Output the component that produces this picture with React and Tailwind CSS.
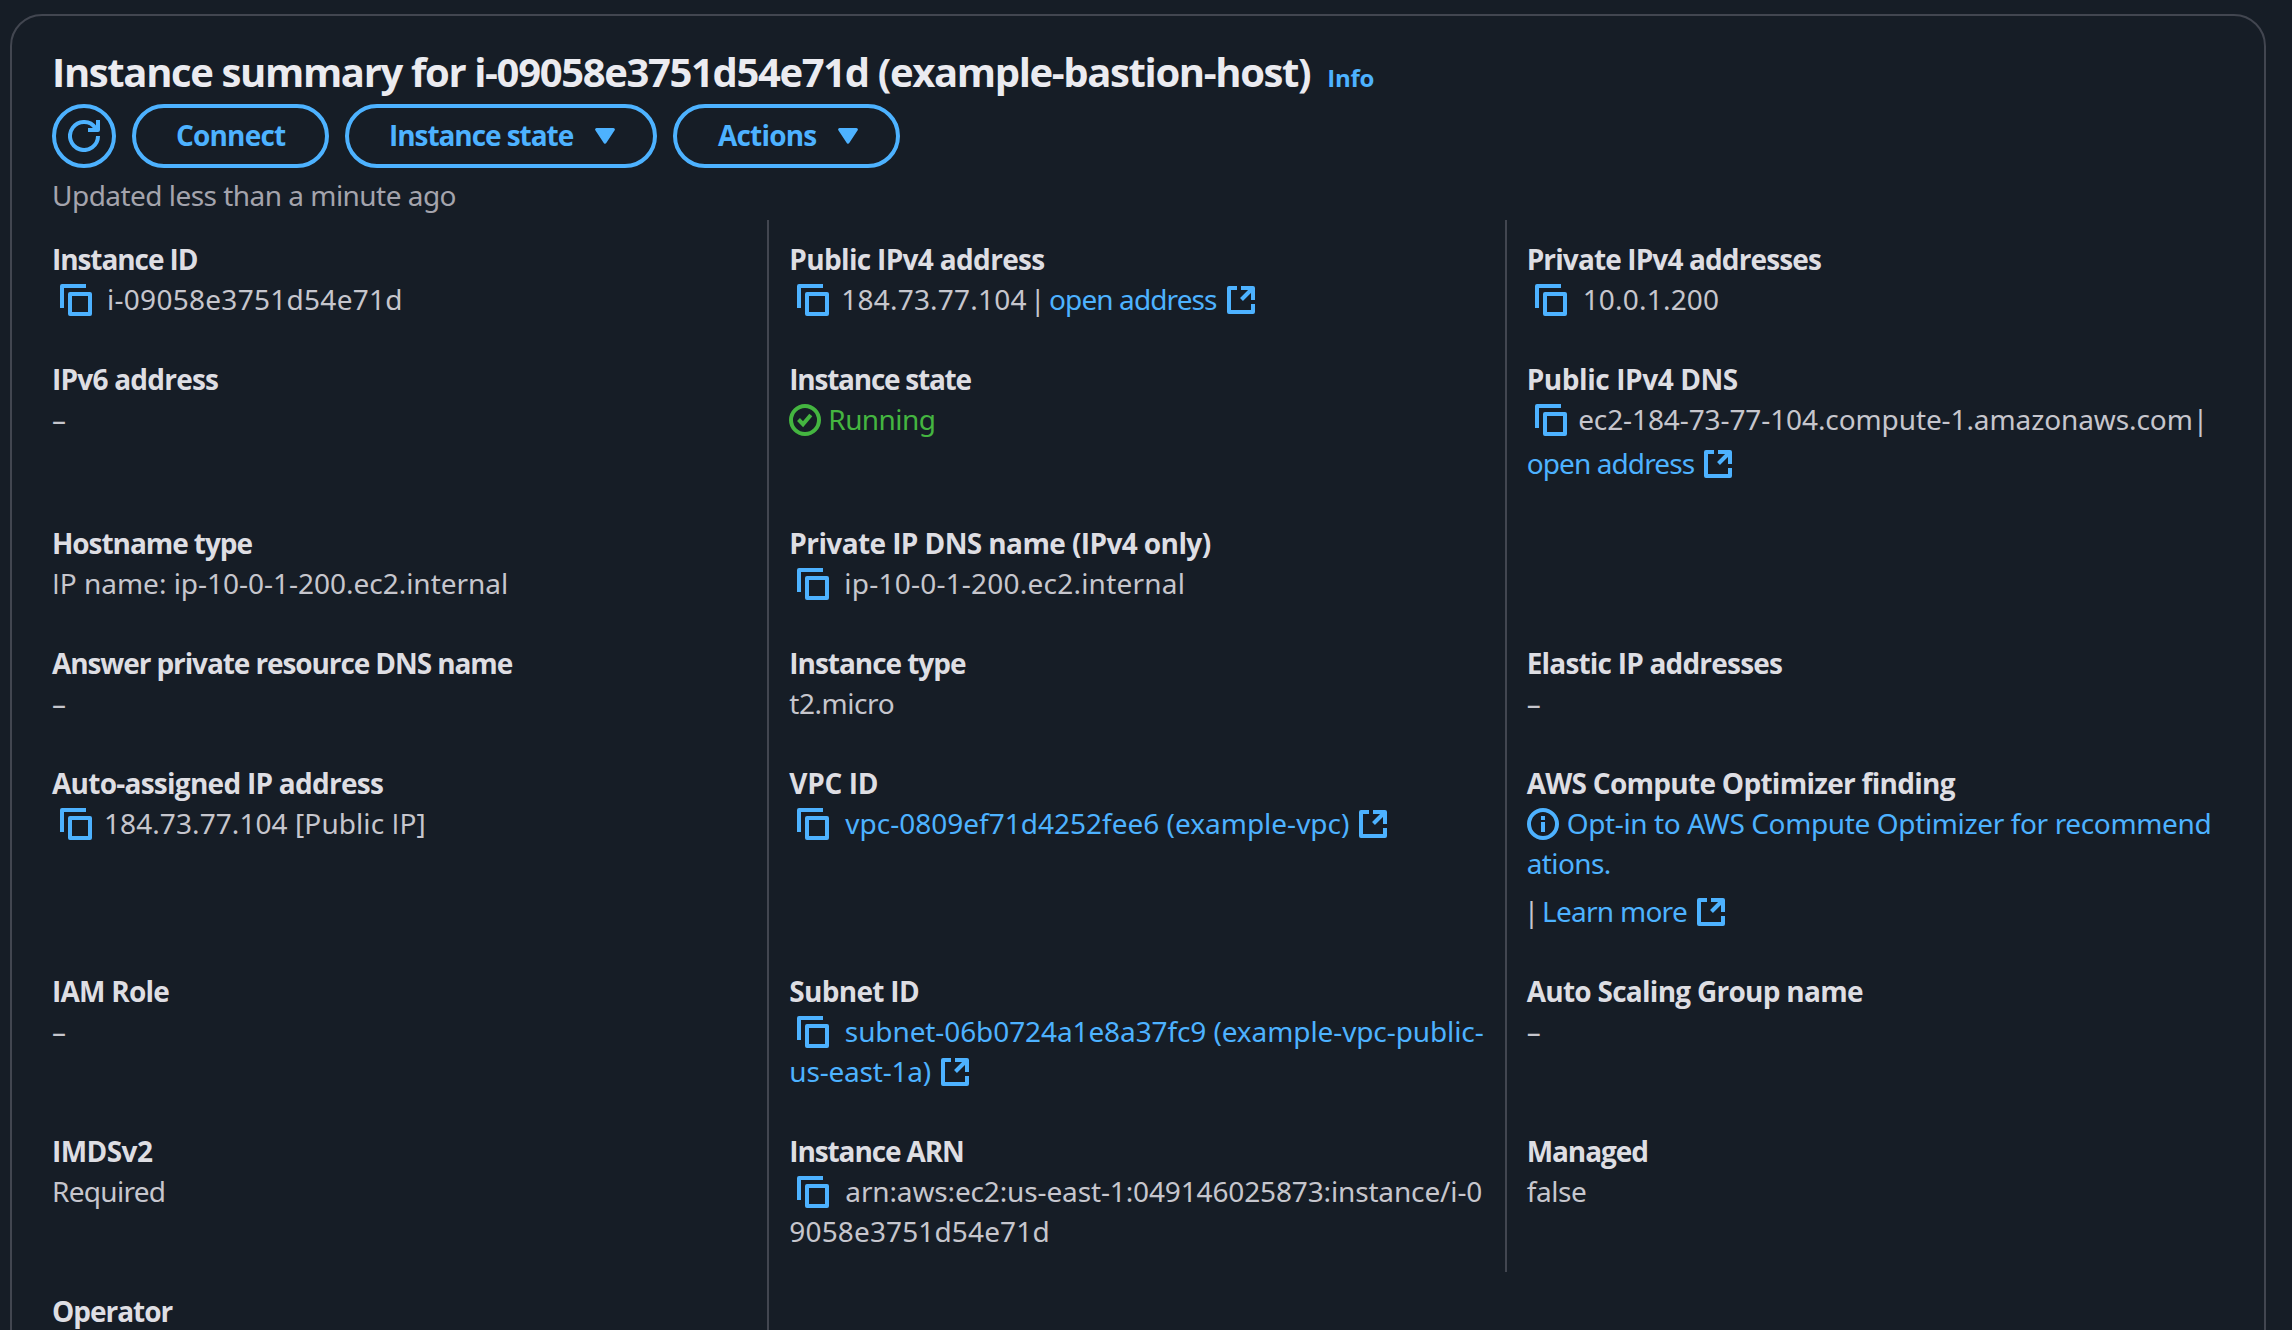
function CopyIcon() {
  return (
    <svg viewBox="0 0 32 32" className="ml-2 mt-[5px] size-8 shrink-0 fill-none stroke-current text-[#4db2ff]" strokeWidth="4" strokeLinejoin="round">
      <path d="M2 24V2H26" />
      <path d="M10 10H30V30H10Z" />
    </svg>
  );
}

function ExternalIcon() {
  return (
    <svg viewBox="0 0 32 32" className="ml-2 mt-[5px] size-8 shrink-0 fill-none stroke-current text-[#4db2ff]" strokeWidth="4" strokeLinejoin="round">
      <path d="M12 4H4V28H28V20" />
      <path d="M16 4H28V16" />
      <path d="M28 4L16.5 15.5" />
    </svg>
  );
}

function CheckIcon() {
  return (
    <svg viewBox="0 0 32 32" className="mt-[5px] size-8 shrink-0 fill-none stroke-current" strokeWidth="4">
      <circle cx="16" cy="16" r="14" />
      <path d="M9.5 15.5L14 20.2L21.8 11" />
    </svg>
  );
}

function InfoIcon() {
  return (
    <svg viewBox="0 0 32 32" className="mt-[5px] size-8 shrink-0 fill-none stroke-current text-[#4db2ff]" strokeWidth="4">
      <circle cx="16" cy="16" r="14" />
      <path d="M16 8V12M16 14V24" />
    </svg>
  );
}

function RefreshIcon() {
  return (
    <svg viewBox="0 0 32 32" className="size-8 fill-none stroke-current" strokeWidth="4">
      <path d="M30 16A14 14 0 1 1 27.5 8L29 10" />
      <path d="M30 0V10H20" strokeLinejoin="round" />
    </svg>
  );
}

function Caret() {
  return (
    <svg viewBox="0 0 32 32" className="size-8 shrink-0 fill-current stroke-current" strokeWidth="3" strokeLinejoin="round">
      <path d="M7.6 9.5H24.4L16 22.2Z" />
    </svg>
  );
}

function Button({ children, className = "" }) {
  return (
    <button className={"flex h-16 shrink-0 items-center rounded-full border-4 border-[#4db2ff] font-['Open_Sans',sans-serif] text-[28px] leading-10 font-bold text-[#4db2ff] " + className}>
      {children}
    </button>
  );
}

const Line = ({ children, className = "" }) => (
  <div className={"flex h-10 items-start whitespace-pre " + className}>{children}</div>
);

const Link = ({ children, className = "" }) => (
  <a className={"text-[#4db2ff] " + className}>{children}</a>
);

/* Capital I without serifs. */
const PlainI = () => <span className="font-['Open_Sans',sans-serif] font-medium">I</span>;

const Dash = () => <Line>–</Line>;

function Field({ label, tracking = "", first = false, children }) {
  return (
    <div className={"border-l-2 pt-[19px] pb-[21px] pl-5 " + (first ? "border-transparent" : "border-[#424650]")}>
      {label && <div className={"h-10 font-['Open_Sans',sans-serif] font-bold whitespace-nowrap text-[#dedee3] " + tracking}>{label}</div>}
      {children}
    </div>
  );
}

export default function App() {
  return (
    <div className="flex h-[1330px] flex-col overflow-hidden bg-[#161d26] pt-[14px] pr-[26px] pl-[10px] font-['Noto_Sans',sans-serif] text-[28px] leading-10 text-[#c6c6cd]">
      <section className="h-[1400px] shrink-0 rounded-[32px] border-2 border-[#424650] px-10 pt-8">
        <header>
          <div className="flex items-baseline font-['Open_Sans',sans-serif] font-bold">
            <h2 className="text-[40px] leading-[48px] tracking-[-1.36px] whitespace-nowrap text-[#ebebf0]">
              Instance summary for i-09058e3751d54e71d (example-bastion-host)
            </h2>
            <Link className="ml-[17px] text-[24px] leading-8 tracking-[-0.24px]">Info</Link>
          </div>
          <div className="mt-2 flex gap-4">
            <Button className="w-16 justify-center"><RefreshIcon /></Button>
            <Button className="w-[197px] px-10"><span className="pb-0.5 tracking-[-0.83px]">Connect</span></Button>
            <Button className="w-[312px] pr-8 pl-10">
              <span className="grow pb-0.5 text-left tracking-[-1.06px]">Instance state</span>
              <Caret />
            </Button>
            <Button className="w-[227px] pr-8 pl-[41px]">
              <span className="grow pb-0.5 text-left tracking-[-0.81px]">Actions</span>
              <Caret />
            </Button>
          </div>
          <div className="mt-[7px] tracking-[-0.53px] text-[#a4a4ad]">Updated less than a minute ago</div>
        </header>

        <div className="mt-[5px] -mr-[18px] -ml-[22px] grid grid-cols-3">
          <Field first label="Instance ID" tracking="tracking-[-1.08px]">
            <Line><CopyIcon /><span className="ml-[15px] tracking-[0.28px]">i-09058e3751d54e71d</span></Line>
          </Field>
          <Field label="Public IPv4 address" tracking="tracking-[-0.67px]">
            <Line>
              <CopyIcon />
              <span className="ml-3 tracking-[0.2px]">184.73.77.104</span>
              <span className="ml-[3.5px]">|</span>
              <Link className="ml-[3.5px] tracking-[-0.9px]">open address</Link>
              <ExternalIcon />
            </Line>
          </Field>
          <Field label="Private IPv4 addresses" tracking="tracking-[-0.88px]">
            <Line><CopyIcon /><span className="ml-4 tracking-[0.2px]">10.0.1.200</span></Line>
          </Field>

          <Field first label="IPv6 address" tracking="tracking-[-0.77px]"><Dash /></Field>
          <Field label="Instance state" tracking="tracking-[-1.25px]">
            <Line className="text-[#44b540]"><CheckIcon /><span className="ml-[7px] tracking-[-0.59px]">Running</span></Line>
          </Field>
          <Field label="Public IPv4 DNS" tracking="tracking-[-0.42px]">
            <Line>
              <CopyIcon />
              <span className="ml-[11.5px] tracking-[-0.1px]">ec2-184-73-77-104.compute-1.amazonaws.com</span>
              <span>|</span>
            </Line>
            <Line className="mt-1">
              <Link className="tracking-[-0.9px]">open address</Link>
              <ExternalIcon />
            </Line>
          </Field>

          <Field first label="Hostname type" tracking="tracking-[-1.07px]">
            <Line className="tracking-[-0.02px]"><PlainI />P name: ip-10-0-1-200.ec2.internal</Line>
          </Field>
          <Field label="Private IP DNS name (IPv4 only)" tracking="tracking-[-0.6px]">
            <Line><CopyIcon /><span className="ml-[15px] tracking-[0.22px]">ip-10-0-1-200.ec2.internal</span></Line>
          </Field>
          <Field />

          <Field first label="Answer private resource DNS name" tracking="tracking-[-1.1px]"><Dash /></Field>
          <Field label="Instance type" tracking="tracking-[-1.04px]">
            <Line className="tracking-[-0.45px]">t2.micro</Line>
          </Field>
          <Field label="Elastic IP addresses" tracking="tracking-[-0.8px]"><Dash /></Field>

          <Field first label="Auto-assigned IP address" tracking="tracking-[-0.74px]">
            <Line><CopyIcon /><span className="ml-3 tracking-[0.08px]">184.73.77.104 [Public <PlainI />P]</span></Line>
          </Field>
          <Field label="VPC ID" tracking="tracking-[-0.36px]">
            <Line>
              <CopyIcon />
              <Link className="ml-4">vpc-0809ef71d4252fee6 (example-vpc)</Link>
              <ExternalIcon />
            </Line>
          </Field>
          <Field label="AWS Compute Optimizer finding" tracking="tracking-[-0.72px]">
            <Line>
              <InfoIcon />
              <Link className="ml-2 tracking-[-0.37px]">Opt-in to AWS Compute Optimizer for recommend</Link>
            </Line>
            <Line><Link className="tracking-[-0.6px]">ations.</Link></Line>
            <Line className="mt-2">
              <span className="-ml-[3px]">|</span>
              <Link className="ml-[3px] tracking-[-0.74px]">Learn more</Link>
              <ExternalIcon />
            </Line>
          </Field>

          <Field first label="IAM Role" tracking="tracking-[-0.76px]"><Dash /></Field>
          <Field label="Subnet ID" tracking="tracking-[-0.7px]">
            <Line>
              <CopyIcon />
              <Link className="ml-[15.5px] tracking-[-0.1px]">subnet-06b0724a1e8a37fc9 (example-vpc-public-</Link>
            </Line>
            <Line>
              <Link className="tracking-[-0.2px]">us-east-1a)</Link>
              <ExternalIcon />
            </Line>
          </Field>
          <Field label="Auto Scaling Group name" tracking="tracking-[-0.73px]"><Dash /></Field>

          <Field first label="IMDSv2" tracking="tracking-[-0.55px]"><Line className="tracking-[-0.7px]">Required</Line></Field>
          <Field label="Instance ARN" tracking="tracking-[-1.12px]">
            <Line><CopyIcon /><span className="ml-4 tracking-[-0.14px]">arn:aws:ec2:us-east-1:049146025873:instance/i-0</span></Line>
            <Line className="tracking-[0.14px]">9058e3751d54e71d</Line>
          </Field>
          <Field label="Managed" tracking="tracking-[-1.05px]"><Line className="tracking-[-0.4px]">false</Line></Field>

          <Field first label="Operator" tracking="tracking-[-1.03px]"><Line /></Field>
          <Field />
        </div>
      </section>
    </div>
  );
}
